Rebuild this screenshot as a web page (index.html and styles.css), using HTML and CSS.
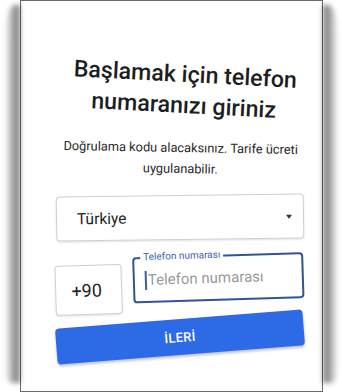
FILE: index.html
```html
<!DOCTYPE html>
<html lang="tr">
<head>
<meta charset="utf-8">
<title>Telefon</title>
<link rel="stylesheet" href="styles.css">
</head>
<body>
<div class="frame">
  <h1 class="title">Başlamak için telefon<br>numaranızı giriniz</h1>
  <p class="subtitle">Doğrulama kodu alacaksınız. Tarife ücreti<br>uygulanabilir.</p>
  <div class="select">
    <span class="select-text">Türkiye</span>
    <span class="caret"></span>
  </div>
  <div class="phone-row">
    <div class="code">+90</div>
    <div class="field">
      <span class="field-label">Telefon numarası</span>
      <span class="cursor"></span>
      <span class="placeholder">Telefon numarası</span>
    </div>
  </div>
  <div class="button">İLERİ</div>
</div>
</body>
</html>
```
FILE: styles.css
```css
html, body {
  margin: 0;
  padding: 0;
  background: #ffffff;
}
body {
  width: 342px;
  height: 392px;
  overflow: hidden;
  font-family: Roboto, "Noto Sans", Arial, sans-serif;
  color: #202020;
}
.frame {
  position: relative;
  margin-left: 20px;
  width: 303px;
  height: 392px;
  box-sizing: border-box;
  border: 1px solid #6a6a6a;
  background: #fff;
  padding: 58px 0 0 0;
  display: flex;
  flex-direction: column;
  align-items: stretch;
}
.frame::before,
.frame::after {
  content: "";
  position: absolute;
  top: 4px;
  bottom: 8px;
  width: 15px;
  filter: blur(2.5px);
}
.frame::before {
  left: -16px;
  background: linear-gradient(to right, rgba(0,0,0,0), rgba(0,0,0,0.4) 60%, rgba(0,0,0,0.5));
  border-radius: 60% 0 0 40% / 10% 0 0 6%;
}
.frame::after {
  right: -16px;
  background: linear-gradient(to left, rgba(0,0,0,0), rgba(0,0,0,0.4) 60%, rgba(0,0,0,0.5));
  border-radius: 0 60% 40% 0 / 0 10% 6% 0;
}
.title {
  margin: 0 0 0 26px;
  font-size: 23.2px;
  line-height: 31px;
  font-weight: 500;
  text-align: center;
  color: #1e1e1e;
  transform: rotate(3deg);
}
.subtitle {
  margin: 16px 0 0 18px;
  font-size: 12.8px;
  line-height: 21px;
  text-align: center;
  color: #2a2a2a;
  transform: rotate(1deg);
}
.select {
  margin: 16px 18px 0 35px;
  height: 45px;
  box-sizing: border-box;
  border: 1px solid #cfcfcf;
  border-radius: 4px;
  box-shadow: 0 1px 2px rgba(0,0,0,0.12);
  display: flex;
  align-items: center;
  justify-content: space-between;
  padding: 0 11px 0 20px;
  transform: rotate(-0.7deg);
}
.select-text {
  font-size: 15.5px;
  color: #222;
}
.caret {
  width: 0;
  height: 0;
  border-left: 3.5px solid transparent;
  border-right: 3.5px solid transparent;
  border-top: 4px solid #333;
}
.phone-row {
  margin: 16px 18px 0 34px;
  display: flex;
  align-items: flex-start;
  gap: 11px;
  transform: rotate(-1.8deg);
}
.code {
  margin-top: 6px;
  width: 67px;
  height: 50px;
  box-sizing: border-box;
  border: 1px solid #cfcfcf;
  border-radius: 4px;
  box-shadow: 0 1px 2px rgba(0,0,0,0.12);
  display: flex;
  align-items: center;
  justify-content: center;
  font-size: 18px;
  color: #222;
  padding-right: 4px;
}
.field {
  position: relative;
  flex: 1;
  height: 46px;
  box-sizing: border-box;
  border: 2px solid #2f5596;
  border-radius: 4px;
  display: flex;
  align-items: center;
  padding-left: 10px;
  gap: 1px;
}
.field-label {
  position: absolute;
  left: 6px;
  top: -8px;
  padding: 0 3px;
  background: #fff;
  font-size: 10px;
  line-height: 12px;
  color: #3d66ad;
}
.cursor {
  width: 2px;
  height: 19px;
  background: #3d5f9a;
}
.placeholder {
  font-size: 15px;
  color: #9a9a9a;
}
.button {
  margin: 7px 18px 0 35px;
  height: 36px;
  border-radius: 4px;
  background: #2d6be6;
  box-shadow: 0 2px 3px rgba(0,0,0,0.25);
  color: #fff;
  font-size: 13px;
  font-weight: 500;
  letter-spacing: 0.3px;
  display: flex;
  align-items: center;
  justify-content: center;
  transform: rotate(-4.5deg);
}
```
